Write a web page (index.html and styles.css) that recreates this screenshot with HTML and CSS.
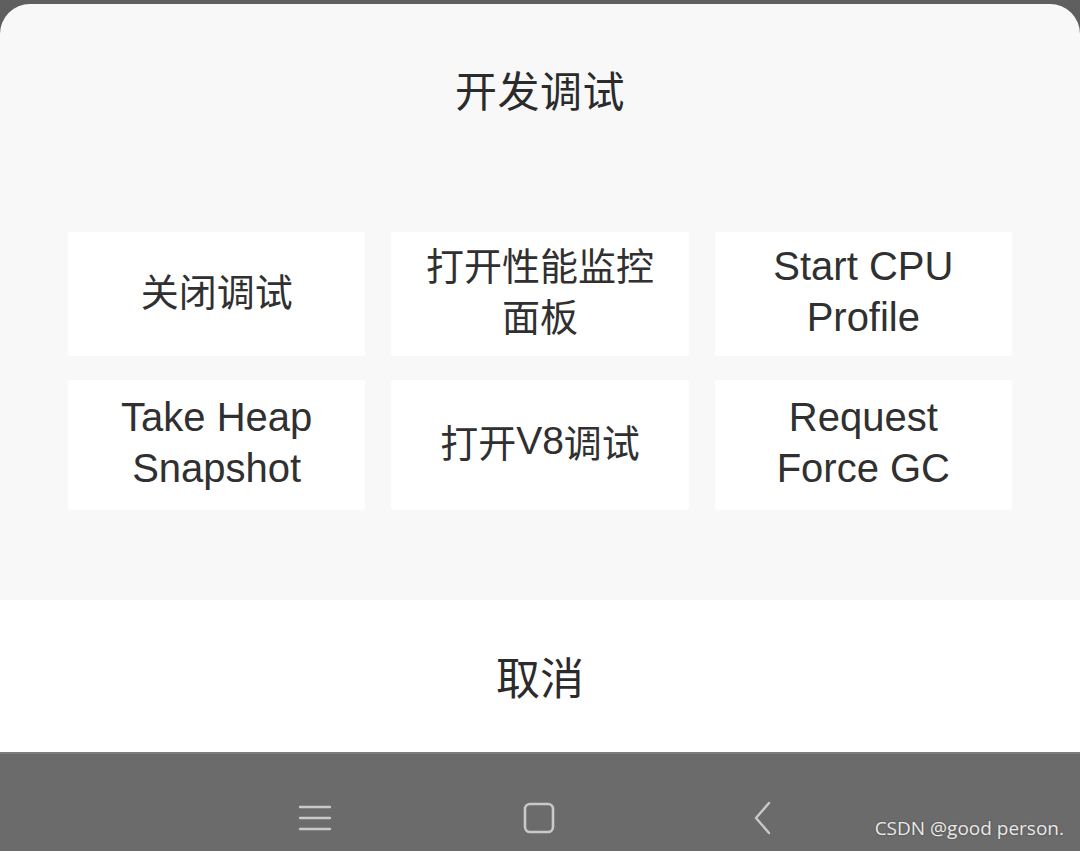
FILE: index.html
```html
<!DOCTYPE html>
<html lang="zh">
<head>
<meta charset="utf-8">
<link rel="stylesheet" href="styles.css">
</head>
<body>
<div class="screen">
  <div class="sheet">
    <h1 class="title">开发调试</h1>
    <div class="grid">
      <div class="card">关闭调试</div>
      <div class="card">打开性能监控<br>面板</div>
      <div class="card en">Start CPU<br>Profile</div>
      <div class="card en">Take Heap<br>Snapshot</div>
      <div class="card">打开<span class="en-inline">V8</span>调试</div>
      <div class="card en">Request<br>Force GC</div>
    </div>
  </div>
  <div class="cancel">取消</div>
  <div class="navbar">
    <div class="nav-item">
      <svg width="34" height="30" viewBox="0 0 34 30"><g stroke="#c9c9c9" stroke-width="2.4" stroke-linecap="round"><line x1="2" y1="4" x2="32" y2="4"/><line x1="2" y1="15" x2="32" y2="15"/><line x1="2" y1="26" x2="32" y2="26"/></g></svg>
    </div>
    <div class="nav-item">
      <svg width="34" height="34" viewBox="0 0 34 34"><rect x="3" y="3" width="28" height="28" rx="5" fill="none" stroke="#c9c9c9" stroke-width="2.6"/></svg>
    </div>
    <div class="nav-item">
      <svg width="24" height="36" viewBox="0 0 24 36"><polyline points="18,3 5,18 18,33" fill="none" stroke="#c9c9c9" stroke-width="2.4" stroke-linecap="round" stroke-linejoin="round"/></svg>
    </div>
    <div class="watermark">CSDN @good person.</div>
  </div>
</div>
</body>
</html>
```

FILE: styles.css
```css
html, body {
  margin: 0;
  padding: 0;
}
body {
  width: 1080px;
  height: 851px;
  overflow: hidden;
  background: #5f5f5f;
  font-family: "Noto Sans CJK SC", sans-serif;
  color: #2e2e2e;
}
.screen {
  display: flex;
  flex-direction: column;
  height: 851px;
  padding-top: 4px;
  box-sizing: border-box;
}
.sheet {
  height: 596px;
  background: #f8f8f8;
  border-radius: 30px 30px 0 0;
  box-sizing: border-box;
  padding-top: 55px;
  display: flex;
  flex-direction: column;
  align-items: center;
}
.title {
  margin: 0;
  font-weight: 400;
  font-size: 42px;
  line-height: 60px;
  letter-spacing: 0.5px;
  color: #2b2b2b;
}
.grid {
  margin-top: 113px;
  width: 944px;
  display: grid;
  grid-template-columns: repeat(3, 1fr);
  grid-template-rows: 124px 130px;
  column-gap: 26px;
  row-gap: 24px;
}
.card {
  background: #ffffff;
  border-radius: 3px;
  display: flex;
  align-items: center;
  justify-content: center;
  text-align: center;
  font-size: 38px;
  line-height: 51px;
  color: #303030;
  padding-bottom: 10px;
  box-sizing: border-box;
}
.card.en {
  font-family: "Liberation Sans", Arial, sans-serif;
  font-size: 40px;
  padding-bottom: 4px;
}
.en-inline {
  font-family: "Liberation Sans", Arial, sans-serif;
  font-size: 39px;
}
.cancel {
  height: 152px;
  background: #ffffff;
  display: flex;
  align-items: center;
  justify-content: center;
  font-size: 44px;
  color: #2b2b2b;
}
.navbar {
  position: relative;
  flex: 1;
  background: #6b6b6b;
  border-top: 2px solid #7c7c7c;
  display: flex;
  align-items: center;
  justify-content: center;
  padding-top: 31px;
  box-sizing: border-box;
}
.nav-item {
  width: 224px;
  display: flex;
  justify-content: center;
  align-items: center;
}
.nav-item:first-child {
  margin-left: -3px;
}
.watermark {
  position: absolute;
  right: 16px;
  bottom: 10px;
  font-family: "Open Sans", sans-serif;
  font-size: 19px;
  color: #eaeaea;
  text-shadow: 0 0 2px #444;
}
```
